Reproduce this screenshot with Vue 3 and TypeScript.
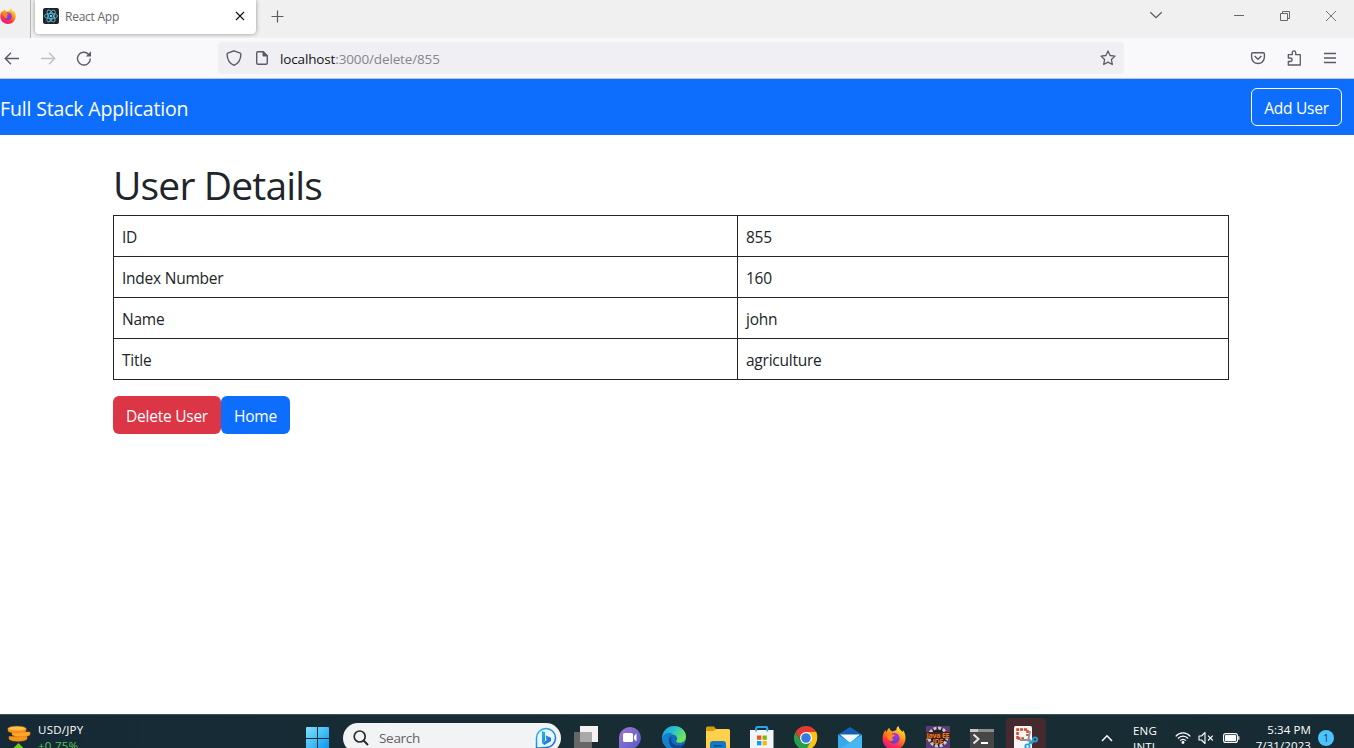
<script setup lang="ts">
interface Row {
  label: string
  value: string
}

const rows: Row[] = [
  { label: 'ID', value: '855' },
  { label: 'Index Number', value: '160' },
  { label: 'Name', value: 'john' },
  { label: 'Title', value: 'agriculture' },
]
</script>

<template>
  <div class="screen">
    <svg class="defs" width="0" height="0">
      <defs>
        <linearGradient id="fox" x1="0.8" y1="0" x2="0.3" y2="1">
          <stop offset="0" stop-color="#fff44f" />
          <stop offset="0.4" stop-color="#ff980e" />
          <stop offset="0.7" stop-color="#ff3647" />
          <stop offset="1" stop-color="#e31587" />
        </linearGradient>
        <linearGradient id="globe" x1="0.6" y1="0" x2="0.4" y2="1">
          <stop offset="0" stop-color="#b833e1" />
          <stop offset="1" stop-color="#5b3fd6" />
        </linearGradient>
        <symbol id="firefox" viewBox="0 0 24 24">
          <path d="M12 24C5 24 .5 18.700 .5 12.500C.5 8.500 2 5.800 3.600 4C3.700 5 4.100 5.700 4.600 6.200C5 4.200 6.200 2.500 7.400 1.800C7.500 3.800 8.700 4.700 10.500 5.400L14.500 4C14.200 2.500 14.800 1 16.500 0C16.700 3.200 19.200 4 20.500 6C21 5.500 21 4.800 20.800 4C22.800 6.300 23.500 9 23.500 12C23.500 18.800 18.500 24 12 24Z" fill="url(#fox)" />
          <circle cx="12.300" cy="12.200" r="5.400" fill="url(#globe)" />
          <path d="M4.500 8C7 6.500 9 7.200 10.500 8.500L13 9C12.500 10.500 10.500 10.500 10 12C9.800 13.200 11 13.500 12 13.200C10.500 15.500 7.800 15.500 6.500 13.500C5.500 12 4 10 4.500 8Z" fill="#ff8a16" />
        </symbol>
      </defs>
    </svg>

    <div class="tabs">
      <div class="pinned"><svg width="16" height="16"><use href="#firefox" /></svg></div>
      <div class="tab">
        <svg class="react" width="16" height="16" viewBox="0 0 16 16">
          <rect width="16" height="16" rx="2" fill="#20232a" />
          <g fill="none" stroke="#58b9d2" stroke-width="0.9">
            <ellipse cx="8" cy="8" rx="6.600" ry="2.600" />
            <ellipse cx="8" cy="8" rx="6.600" ry="2.600" transform="rotate(60 8 8)" />
            <ellipse cx="8" cy="8" rx="6.600" ry="2.600" transform="rotate(120 8 8)" />
          </g>
          <circle cx="8" cy="8" r="1.300" fill="#61dafb" />
        </svg>
        <span class="tab-title">React App</span>
        <svg class="tab-close" width="10" height="10" viewBox="0 0 10 10"><path d="M1 1L9 9M9 1L1 9" stroke="#15141a" stroke-width="1.200" /></svg>
      </div>
      <svg class="plus" width="13" height="13" viewBox="0 0 13 13"><path d="M6.500 .5V12.500M.5 6.500H12.500" stroke="#5b5b66" stroke-width="1.200" /></svg>
      <div class="window-buttons">
        <svg width="14" height="8" viewBox="0 0 14 8"><path d="M1.300 1.200L7 6.700L12.700 1.200" fill="none" stroke="#5b5b66" stroke-width="1.300" /></svg>
        <svg width="10" height="10" viewBox="0 0 10 10"><path d="M0 4.500H10" stroke="#666" /></svg>
        <svg width="10" height="10" viewBox="0 0 10 10"><path d="M.5 2.500H7.500V9.500H.5ZM2.500 2.500V.5H9.500V7.500H7.500" fill="none" stroke="#666" /></svg>
        <svg width="10" height="10" viewBox="0 0 10 10"><path d="M0 0L10 10M10 0L0 10" stroke="#666" stroke-width="0.900" /></svg>
      </div>
    </div>

    <div class="toolbar">
      <div class="nav-icons">
        <svg width="16" height="16" viewBox="0 0 16 16"><path d="M15 8.500H1.500M7 2.700L1.300 8.500L7 14.300" fill="none" stroke="#5b5b66" stroke-width="1.400" /></svg>
        <svg width="16" height="16" viewBox="0 0 16 16"><path d="M1 8.500H14.500M9 2.700L14.700 8.500L9 14.300" fill="none" stroke="#bfbfc4" stroke-width="1.400" /></svg>
        <svg width="16" height="16" viewBox="0 0 16 16"><path d="M14.300 8.600A6.400 6.400 0 1 1 12.500 4.200" fill="none" stroke="#5b5b66" stroke-width="1.400" /><path d="M15 1.300V6.500H9.800Z" fill="#5b5b66" /></svg>
      </div>
      <div class="address">
        <svg width="16" height="16" viewBox="0 0 16 16"><path d="M8 .8L14.200 3.200Q15 3.500 14.900 4.500C14.700 9.800 12.700 13.500 8 15.300C3.300 13.500 1.300 9.800 1.100 4.500Q1 3.500 1.800 3.200Z" fill="none" stroke="#5b5b66" stroke-width="1.400" /></svg>
        <svg width="16" height="16" viewBox="0 0 16 16"><path d="M3.700 1.700H9.300L13.300 5.700V13Q13.300 14.300 12 14.300H4Q2.700 14.300 2.700 13V3Q2.700 1.700 3.700 1.700Z" fill="none" stroke="#5b5b66" stroke-width="1.400" /><path d="M9 1.500V6H13.500Z" fill="#5b5b66" stroke="#5b5b66" /></svg>
        <span class="url"><b>localhost</b>:3000/delete/855</span>
        <svg class="star" width="16" height="16" viewBox="0 0 16 16"><path d="M8 1L10.100 5.500L15 6.100L11.400 9.500L12.300 14.500L8 12.100L3.700 14.500L4.600 9.500L1 6.100L5.900 5.500Z" fill="none" stroke="#5b5b66" stroke-width="1.300" stroke-linejoin="round" /></svg>
      </div>
      <div class="tools">
        <svg width="16" height="16" viewBox="0 0 16 16"><path d="M2.800 2.700H13.200Q14.400 2.700 14.400 3.900V7C14.400 15.700 1.600 15.700 1.600 7V3.900Q1.600 2.700 2.800 2.700Z" fill="none" stroke="#5b5b66" stroke-width="1.400" /><path d="M4.600 6L8 9.300L11.400 6" fill="none" stroke="#5b5b66" stroke-width="1.400" /></svg>
        <svg width="16" height="16" viewBox="0 0 16 16"><path d="M2.300 4.700H6.300V2.600C6.300 .2 9.700 .2 9.700 2.600V4.700H14.300V15H2.300V11.500H4.200C6.800 11.500 6.800 8 4.200 8H2.300Z" fill="none" stroke="#5b5b66" stroke-width="1.300" stroke-linejoin="round" /></svg>
        <svg width="16" height="16" viewBox="0 0 16 16"><path d="M2 3.500H14M2 8H14M2 12.500H14" stroke="#5b5b66" stroke-width="1.300" /></svg>
      </div>
    </div>

    <nav class="navbar">
      <span class="brand">Full Stack Application</span>
      <button class="btn outline">Add User</button>
    </nav>

    <main class="content">
      <h1>User Details</h1>
      <table>
        <tbody>
          <tr v-for="row in rows" :key="row.label">
            <td class="label">{{ row.label }}</td>
            <td>{{ row.value }}</td>
          </tr>
        </tbody>
      </table>
      <div class="actions">
        <button class="btn danger">Delete User</button>
        <button class="btn primary">Home</button>
      </div>
    </main>

    <footer class="taskbar">
      <div class="widget">
        <svg width="24" height="26" viewBox="0 0 24 26">
          <g stroke="#e8860f" stroke-width="0.500">
            <path d="M2 11.500V14C4 17 18 17 20 14V11.500Z" fill="#f7941d" />
            <path d="M5 7V9.700C7 12.300 21 12.300 23 9.700V7Z" fill="#ffa62b" />
            <path d="M1 3.500V6C3 8.800 17 8.800 19 6V3.500Z" fill="#f7941d" />
            <ellipse cx="10" cy="3.600" rx="9" ry="2.400" fill="#ffc04d" />
          </g>
          <path d="M5.500 24L11.500 18L17.500 24V26H14L11.500 23.500L9 26H5.500Z" fill="#6fc91c" />
        </svg>
        <div class="widget-text"><span>USD/JPY</span><span class="up">+0.75%</span></div>
      </div>
      <svg class="start" width="23" height="23" viewBox="0 0 23 23">
        <defs><linearGradient id="win" gradientUnits="userSpaceOnUse" x1="0" y1="0" x2="23" y2="23"><stop stop-color="#7fe0fb" /><stop offset="0.500" stop-color="#43bff5" /><stop offset="1" stop-color="#0791ed" /></linearGradient></defs>
        <path d="M1 0H11V11H0V1Q0 0 1 0ZM12 0H22Q23 0 23 1V11H12ZM0 12H11V23H0ZM12 12H23V23H12Z" fill="url(#win)" />
      </svg>
      <div class="search">
        <svg width="16" height="16" viewBox="0 0 16 16"><circle cx="6.700" cy="6.500" r="5.500" fill="none" stroke="#2b2b2b" stroke-width="1.700" /><path d="M10.600 10.500L15 15" stroke="#2b2b2b" stroke-width="1.900" /></svg>
        <span>Search</span>
        <svg class="bing" width="22" height="22" viewBox="0 0 22 22">
          <defs><linearGradient id="bing" x1="0" y1="0" x2="1" y2="1"><stop stop-color="#25b9f2" /><stop offset="1" stop-color="#1762d5" /></linearGradient></defs>
          <path d="M1.500 21V11A9.500 9.500 0 1 1 11 20.500Z" fill="#e8f7ff" stroke="url(#bing)" stroke-width="1.500" />
          <path d="M7 4L10 5.200V13.800L7 16ZM10.500 8.200L16 10.700V14L9.300 18L7 16L11.500 13.200Z" fill="url(#bing)" />
        </svg>
      </div>
      <div class="apps">
        <div class="slot"><svg width="24" height="24" viewBox="0 0 24 24"><rect x="6" width="18" height="16" fill="#f2f2f2" /><rect x="0" y="6" width="18" height="18" fill="#666" /><rect x="6" y="6" width="12" height="10" fill="#a9a9a9" /></svg></div>
        <div class="slot"><svg width="24" height="24" viewBox="0 0 24 24">
          <defs><linearGradient id="chat" x1="0" y1="0" x2="1" y2="1"><stop stop-color="#a078cf" /><stop offset="1" stop-color="#5059c9" /></linearGradient></defs>
          <path d="M1 24V11A11 11 0 1 1 12 23Z" fill="url(#chat)" /><rect x="5" y="7" width="10" height="9" rx="1.500" fill="#fff" /><path d="M16 10L18.500 7.500V15.500L16 13Z" fill="#fff" />
        </svg></div>
        <div class="slot"><svg width="24" height="24" viewBox="0 0 24 24">
          <defs><linearGradient id="edge" x1="0" y1="0" x2="1" y2="0.500"><stop stop-color="#159ce2" /><stop offset="0.500" stop-color="#29c3cb" /><stop offset="1" stop-color="#76e650" /></linearGradient></defs>
          <circle cx="12" cy="12" r="12" fill="#126abb" />
          <path d="M0 12C1 4 6 0 12 0C19 0 24 5 24 10.500C24 15 20.500 17 17.300 16.700C14.500 16.500 13.500 15.700 14.500 14.500C16.500 12 14 8.500 10 8.500C5 8.500 1 10 0 14Z" fill="url(#edge)" />
          <path d="M0 12C2 7 7 5.500 11 7.500C7 8.500 6 12 7 16C8 20 11 22.500 14 23.800C6 25 0 19 0 12Z" fill="#1480d0" />
          <path d="M9.800 10.500C7.500 14 10 19 15 19.500C18 19.800 20.500 19 22.500 17.500L20 21C13 25 6.500 21 7 14Q7.500 11 9.800 10.500Z" fill="#0c458c" />
        </svg></div>
        <div class="slot"><svg width="24" height="24" viewBox="0 0 24 24">
          <path d="M0 2Q0 .5 1.500 .5H8L10 3V8H0Z" fill="#d99b10" /><path d="M0 5H7L10 3H22.500Q24 3 24 4.500V24H0Z" fill="#ffd04b" /><path d="M4 24V18Q4 15 7 15H17Q20 15 20 18V24Z" fill="#1278c5" /><path d="M8 19H16V20.500H8Z" fill="#0b4d87" />
        </svg></div>
        <div class="slot"><svg width="24" height="24" viewBox="0 0 24 24">
          <path d="M6.200 6V2.200Q6.200 1 7.400 1H16.100Q17.300 1 17.300 2.200V6" fill="none" stroke="#28a8ea" stroke-width="1.800" /><path d="M0 4H23.500V24H0Z" fill="#f3f4f6" /><path d="M6.200 1.500V5.500M17.300 1.500V5.500" stroke="#28a8ea" stroke-width="1.800" /><path d="M7 9.500H11.300V13.800H7Z" fill="#f25022" /><path d="M12.500 9.500H16.800V13.800H12.500Z" fill="#7fba00" /><path d="M7 15H11.300V19.300H7Z" fill="#00a4ef" /><path d="M12.500 15H16.800V19.300H12.500Z" fill="#ffb900" />
        </svg></div>
        <div class="slot"><svg width="24" height="24" viewBox="0 0 24 24">
          <path d="M22.400 6H12V24C20 24 25.500 15 22.400 6Z" fill="#fbc116" /><path d="M1.600 6A12 12 0 0 0 12 24L17.200 15L6.800 15Z" fill="#269f4c" /><path d="M1.600 6A12 12 0 0 1 22.400 6H12L6.800 15Z" fill="#e33b2e" /><circle cx="12" cy="12" r="6" fill="#fff" /><circle cx="12" cy="12" r="4.800" fill="#307de8" />
        </svg></div>
        <div class="slot"><svg width="24" height="24" viewBox="0 0 24 24">
          <path d="M0 8.500L12 1L24 8.500V24H0Z" fill="#1162b5" /><path d="M2 8.500H22L12 17Z" fill="#f5f8fa" /><path d="M0 8.500L17 20L24 24H0Z" fill="#35a9ea" /><path d="M24 8.500V24H0L14 15Z" fill="#45b7f2" />
        </svg></div>
        <div class="slot"><svg width="24" height="24"><use href="#firefox" /></svg></div>
        <div class="slot"><svg width="24" height="24" viewBox="0 0 24 24">
          <rect width="24" height="24" fill="#5a3b72" /><circle cx="12" cy="11" r="9" fill="#241c22" stroke="#c9c9c9" stroke-width="3" stroke-dasharray="3 1.700" /><rect x="0" y="6" width="24" height="6.500" fill="#3c2422" />
          <text class="jee" x="0.500" y="11.500" textLength="23">Java EE</text><text class="jee" x="6.500" y="18" textLength="11">IDE</text>
        </svg></div>
        <div class="slot"><svg width="24" height="24" viewBox="0 0 24 24">
          <rect y="3" width="24" height="21" fill="#464646" /><rect y="3" width="24" height="3" fill="#8e8e8e" /><rect x="0" y="3" width="8" height="3" fill="#c8c8c8" /><path d="M3.500 8.500L8.500 13L3.500 17.500" fill="none" stroke="#e6e6e6" stroke-width="2" /><path d="M11 17H18" stroke="#fff" stroke-width="2" />
        </svg></div>
        <div class="slot active"><svg width="24" height="24" viewBox="0 0 24 24">
          <rect width="18" height="24" rx="1.500" fill="#f5f5f5" /><path d="M3.500 13V3.500H13.500V10M3.500 12.500H10" fill="none" stroke="#df421e" stroke-width="2.500" stroke-dasharray="3 1" /><path d="M16 5L14.500 13L19 17M6 14H14L18 18" fill="none" stroke="#8c9499" stroke-width="1.900" /><circle cx="21" cy="13.500" r="2.200" fill="none" stroke="#1da1e2" stroke-width="1.700" /><circle cx="13.500" cy="20.500" r="2.200" fill="none" stroke="#1da1e2" stroke-width="1.700" /><path d="M15 18L20 14" stroke="#1da1e2" stroke-width="2" />
        </svg></div>
      </div>
      <div class="tray">
        <svg class="chevron" width="12" height="8" viewBox="0 0 12 8"><path d="M1 7L6 1.800L11 7" fill="none" stroke="#fff" stroke-width="1.500" /></svg>
        <div class="lang"><span>ENG</span><span>INTL</span></div>
        <svg class="wifi" width="16" height="14" viewBox="0 0 16 14"><g fill="none" stroke="#fff" stroke-width="1.200"><path d="M.7 5.300C4.800 .8 11.200 .8 15.300 5.300M2.900 7.500C5.800 4.400 10.200 4.400 13.100 7.500M5.100 9.700C6.800 7.900 9.200 7.900 10.900 9.700" /></g><circle cx="8" cy="11.500" r="1.400" fill="#fff" /></svg>
        <svg class="sound" width="16" height="14" viewBox="0 0 16 14"><path d="M1 5H3.500L7 1.500V12.500L3.500 9H1Z" fill="none" stroke="#fff" stroke-width="1.100" stroke-linejoin="round" /><path d="M10 4.700L14.800 9.500M14.800 4.700L10 9.500" stroke="#fff" stroke-width="1.100" /></svg>
        <svg class="battery" width="17" height="10" viewBox="0 0 17 10"><rect x=".6" y=".6" width="13.800" height="8.800" rx="2" fill="none" stroke="#fff" stroke-width="1.100" /><rect x="2" y="2" width="11" height="6" rx=".6" fill="#fff" /><path d="M15.800 3.300V6.700" stroke="#fff" stroke-width="1.200" /></svg>
        <div class="clock"><span>5:34 PM</span><span>7/31/2023</span></div>
        <span class="badge">1</span>
      </div>
    </footer>
  </div>
</template>

<style>
body {
  overflow: hidden;
}
</style>

<style scoped>
.screen {
  width: 1354px;
  height: 748px;
  overflow: hidden;
  display: flex;
  flex-direction: column;
  background: #fff;
  color: #212529;
  font-family: "Open Sans", "Noto Sans", sans-serif;
  font-size: 15.5px;
  white-space: nowrap;
}
svg {
  display: block;
  flex: none;
}
.defs {
  position: absolute;
}
.tabs {
  height: 38px;
  flex: none;
  display: flex;
  background: #f0f0f0;
}
.pinned {
  width: 30px;
  height: 38px;
  border-right: 1px solid #b5b5b8;
}
.pinned svg {
  margin-top: 8px;
}
.tab {
  width: 221px;
  height: 34px;
  margin-left: 4px;
  border-radius: 0 0 4px 4px;
  background: #fff;
  box-shadow: 0 0 4px rgba(0, 0, 0, 0.4);
  display: flex;
}
.react {
  margin: 8px 0 0 8px;
}
.tab-title {
  margin-left: 6px;
  line-height: 33px;
  font-size: 12px;
  letter-spacing: -0.24px;
  color: #68686e;
}
.tab-close {
  margin: 11px 11px 0 auto;
}
.plus {
  margin: 10px 0 0 15px;
}
.window-buttons {
  margin: 11px 18px 0 auto;
  display: flex;
  gap: 36px;
}
.window-buttons svg:first-child {
  margin-right: 35px;
}
.toolbar {
  height: 40px;
  flex: none;
  border-bottom: 1px solid #c4c5cc;
  background: #f9f9fb;
  display: flex;
  align-items: center;
}
.nav-icons {
  margin-left: 4px;
  display: flex;
  gap: 20px;
}
.address {
  width: 906px;
  height: 32px;
  box-sizing: border-box;
  margin-left: 126px;
  padding: 0 8px;
  border-radius: 4px;
  background: #f0f0f4;
  display: flex;
  align-items: center;
  gap: 12px;
}
.url {
  margin-left: -2px;
  padding-top: 1px;
  color: #85858c;
  font-size: 13.500px;
  letter-spacing: -0.14px;
}
.url b {
  color: #15141a;
  font-weight: 400;
}
.star {
  margin-left: auto;
}
.tools {
  margin-left: auto;
  margin-right: 16px;
  display: flex;
  gap: 20px;
}
.navbar {
  height: 56px;
  flex: none;
  box-sizing: border-box;
  padding-right: 12px;
  background: #0d6efd;
  color: #fff;
  display: flex;
  align-items: center;
  justify-content: space-between;
}
.brand {
  padding-top: 3px;
  font-size: 19.500px;
  letter-spacing: -0.16px;
}
.btn {
  height: 38px;
  box-sizing: border-box;
  padding: 2px 0 0;
  border: 1px solid transparent;
  border-radius: 6px;
  color: #fff;
  font: inherit;
  letter-spacing: -0.24px;
  line-height: 24px;
}
.outline {
  width: 91px;
  border-color: #fff;
  background: transparent;
}
.danger {
  width: 108px;
  background: #dc3545;
}
.primary {
  width: 69px;
  background: #0d6efd;
}
.content {
  flex: 1;
  min-height: 0;
  padding: 24px 125px 0 113px;
}
h1 {
  height: 48px;
  margin: 0 0 8px;
  padding-top: 2px;
  box-sizing: border-box;
  font-size: 39px;
  line-height: 48px;
  font-weight: 400;
  letter-spacing: -0.83px;
}
table {
  width: 1116px;
  table-layout: fixed;
  border-collapse: collapse;
}
tr {
  height: 41px;
}
td {
  height: 38px;
  padding: 2px 8px 0;
  box-sizing: border-box;
  border: 1px solid #212529;
  letter-spacing: -0.24px;
}
.label {
  width: 624px;
}
.actions {
  margin-top: 16px;
  display: flex;
}
.taskbar {
  height: 34px;
  flex: none;
  box-sizing: border-box;
  overflow: hidden;
  border-top: 1px solid #40545a;
  background: linear-gradient(90deg, #152a36, #182d33 50%, #162b33);
  color: #fff;
  display: flex;
  align-items: flex-start;
  font-size: 11.500px;
}
.widget {
  width: 306px;
  display: flex;
}
.widget > svg {
  margin: 10px 0 0 7px;
}
.widget-text,
.lang,
.clock {
  display: flex;
  flex-direction: column;
  line-height: 16px;
}
.widget-text {
  margin: 7px 0 0 7px;
  letter-spacing: 0.25px;
}
.up {
  color: #59c750;
}
.start {
  margin-top: 12px;
}
.search {
  width: 218px;
  height: 30px;
  margin: 8px 3px 0 14px;
  box-sizing: border-box;
  padding: 0 4px 0 10px;
  border-radius: 15px;
  background: #f2f3f4;
  display: flex;
  align-items: center;
  color: #606060;
  font-size: 13.500px;
  letter-spacing: -0.3px;
}
.search span {
  margin-left: 10px;
}
.bing {
  margin-left: auto;
}
.apps {
  display: flex;
}
.slot {
  width: 40px;
  height: 40px;
  margin: 3px 2px 0;
  border-radius: 4px;
  display: flex;
  justify-content: center;
}
.slot svg {
  margin-top: 8px;
}
.active {
  background: #46292c;
}
.jee {
  fill: #f07a22;
  font-size: 7px;
  font-weight: 700;
}
.tray {
  flex: 1;
  display: flex;
}
.chevron {
  margin: 19px 0 0 53px;
}
.lang {
  width: 24px;
  margin: 8px 0 0 20px;
  letter-spacing: 0.2px;
}
.wifi {
  margin: 16px 0 0 18px;
}
.sound {
  margin: 16px 0 0 7px;
}
.battery {
  margin: 18px 0 0 9px;
}
.clock {
  width: 71px;
  margin-top: 7px;
  align-items: flex-end;
  letter-spacing: 0.1px;
}
.badge {
  width: 16px;
  height: 16px;
  margin: 15px 0 0 7px;
  border-radius: 50%;
  background: #4cc2ff;
  color: #17394d;
  font-size: 10px;
  line-height: 16px;
  text-align: center;
}
</style>
